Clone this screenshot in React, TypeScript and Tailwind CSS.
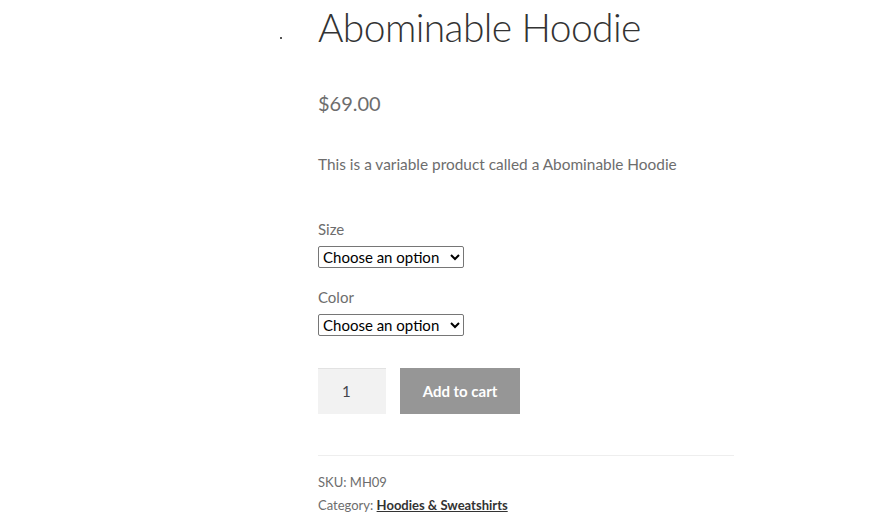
export default function App() {
  const font = { fontFamily: '"Lato", "Open Sans", sans-serif' };
  return (
    <div className="w-[880px] h-[517px] bg-white overflow-hidden relative" style={font}>
      <div className="absolute left-[280px] top-[37px] w-[2px] h-[2px] bg-[#555]" />
      <div className="ml-[318px] w-[416px] flex flex-col">
        <h1 className="text-[39px] leading-[52px] font-light text-[#333] mt-[1px] tracking-[-0.6px]">Abominable Hoodie</h1>
        <p className="text-[20px] leading-[28px] text-[#6d6d6d] mt-[36px]">$69.00</p>
        <p className="text-[15.4px] leading-[24px] text-[#6d6d6d] mt-[35px]">This is a variable product called a Abominable Hoodie</p>
        <div className="mt-[42px] flex flex-col">
          <label className="text-[15px] leading-[20px] text-[#6d6d6d] mt-[1px]">Size</label>
          <select className="mt-[7px] w-[146px] h-[22px] border border-[#767676] rounded-[2px] text-[15px] text-black px-0 bg-white" style={font}>
            <option>Choose an option</option>
          </select>
          <label className="mt-[19px] text-[15px] leading-[20px] text-[#6d6d6d]">Color</label>
          <select className="mt-[7px] w-[146px] h-[22px] border border-[#767676] rounded-[2px] text-[15px] text-black px-0 bg-white" style={font}>
            <option>Choose an option</option>
          </select>
        </div>
        <div className="mt-[32px] flex gap-[14px]">
          <div className="w-[68px] h-[46px] bg-[#f2f2f2] border-t border-[#e2e2e2] flex items-center pl-[24px] text-[15px] text-[#43454b]">1</div>
          <button className="w-[120px] h-[46px] bg-[#969696] text-white font-bold text-[15px]">Add to cart</button>
        </div>
        <div className="mt-[41px] border-t border-[#eeeeee]" />
        <p className="mt-[15px] text-[13px] leading-[23px] text-[#6d6d6d]">SKU: MH09</p>
        <p className="text-[13px] leading-[23px] text-[#6d6d6d]">Category: <a className="underline font-bold text-[#333]">Hoodies &amp; Sweatshirts</a></p>
      </div>
    </div>
  );
}
